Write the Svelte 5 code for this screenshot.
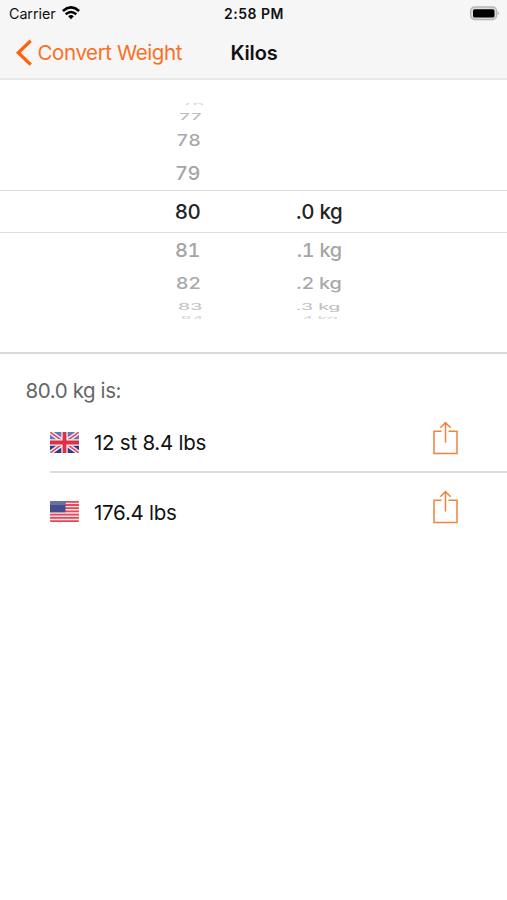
<script>
  const rows = [
    { h: 8, whole: '76', part: '', sx: 0.84, sy: 0.3, dx: 5, dy: 0, color: '#d8d8d8', edge: 'top' },
    { h: 16, whole: '77', part: '', sx: 0.9, sy: 0.44, dx: 2.5, dy: 0.5, color: '#bdbdbd' },
    { h: 32, whole: '78', part: '', sx: 0.95, sy: 0.78, dx: 0.7, dy: 0.8, color: '#a9a9a9' },
    { h: 34, whole: '79', part: '', sx: 0.97, sy: 0.94, dx: 0, dy: 0, color: '#a5a5a5' },
    { h: 43, whole: '80', part: '.0 kg', sx: 1, sy: 1, dx: 0, dy: 0, color: '#242424', selected: true },
    { h: 34, whole: '81', part: '.1 kg', sx: 0.97, sy: 0.94, dx: 0, dy: 0, color: '#a5a5a5' },
    { h: 32, whole: '82', part: '.2 kg', sx: 0.97, sy: 0.78, dx: 0.7, dy: 0.8, color: '#a9a9a9' },
    { h: 15, whole: '83', part: '.3 kg', sx: 0.95, sy: 0.44, dx: 2.5, dy: -0.3, color: '#c2c2c2' },
    { h: 9, whole: '84', part: '.4 kg', sx: 0.88, sy: 0.3, dx: 4, dy: 0, color: '#d8d8d8', edge: 'bottom' }
  ];
  const results = [
    { flag: 'uk', text: '12 st 8.4 lbs' },
    { flag: 'us', text: '176.4 lbs' }
  ];
</script>

<div class="screen">
  <header>
    <div class="status">
      <div class="carrier">
        <span>Carrier</span>
        <svg width="18" height="14" viewBox="0 0 18 14" fill="none" stroke="#000" stroke-width="2.6">
          <path d="M.9 4.9Q9-2.2 17.1 4.9M3.7 8.2Q9 3.8 14.3 8.2" />
          <path d="M6.1 10.3Q9 7.9 11.9 10.3L9 13.2Z" fill="#000" stroke="none" />
        </svg>
      </div>
      <span class="time">2:58 PM</span>
      <div class="power">
        <svg width="31" height="15" viewBox="0 0 31 15">
          <rect x="1.6" y="1" width="26" height="12.5" rx="4" fill="#ddd" stroke="#b5b5b5" stroke-width="1.3" />
          <rect x="4" y="3.2" width="21.5" height="8.3" rx="1.6" fill="#000" />
          <path d="M28.8 5.2Q30.8 7.2 28.8 9.2Z" fill="#999" />
        </svg>
      </div>
    </div>
    <nav>
      <div class="back">
        <svg width="17" height="28" viewBox="0 0 17 28" fill="none" stroke="#fb6310" stroke-width="3.3">
          <path d="M15.7 1.8L3.3 13.7L15.7 25.6" />
        </svg>
        <span>Convert Weight</span>
      </div>
      <h1>Kilos</h1>
      <div></div>
    </nav>
  </header>

  <section class="picker">
    {#each rows as row}
      <div class="row {row.edge ?? ''}" class:selected={row.selected} style="height: {row.h}px; color: {row.color}">
        <span class="whole" style="transform: translate({row.dx}px, {row.dy}px) scale({row.sx}, {row.sy})">{row.whole}</span>
        <span class="part" style="transform: translate({-row.dx / 2}px, {row.dy}px) scale({row.sx}, {row.sy})">{row.part}</span>
      </div>
    {/each}
  </section>

  <main>
    <h2>80.0 kg is:</h2>
    {#each results as result}
      <div class="result">
        {#if result.flag === 'uk'}
          <svg class="flag" width="29" height="21" viewBox="0 0 29 21">
            <rect width="29" height="21" fill="#293c8c" />
            <rect width="29" height="8" fill="#6578b0" />
            <path d="M0 0L29 21M29 0L0 21" stroke="#f4eef3" stroke-width="4.4" />
            <path d="M0 0L14.5 10.5M29 21L14.5 10.5M29 0L14.5 10.5M0 21L14.5 10.5" stroke="#dc5260" stroke-width="1.6" />
            <path d="M14.5 0V21M0 10.5H29" stroke="#f6eef2" stroke-width="6.4" />
            <path d="M14.5 0V21M0 10.5H29" stroke="#db3048" stroke-width="3.8" />
          </svg>
        {:else}
          <svg class="flag" width="29" height="21" viewBox="0 0 29 21">
            <rect width="29" height="21" fill="#fbe3e5" />
            <path d="M0 .8H29M0 4H29M0 7.2H29M0 10.4H29M0 13.6H29M0 16.8H29M0 20.1H29" stroke="#e5485a" stroke-width="1.8" />
            <rect width="15.5" height="11.3" fill="#454d8c" />
            <rect width="15.5" height="4" fill="#6870a4" />
          </svg>
        {/if}
        <span>{result.text}</span>
        <svg class="share" width="26" height="34" viewBox="0 0 26 34" fill="none" stroke="#f4813f" stroke-width="1.5">
          <path d="M9.5 10.2H2V32.5H25V10.2H16.5M13.5 21.5V1.8M8.3 6.8L13.5 1.6L18.7 6.8" />
        </svg>
      </div>
    {/each}
  </main>
</div>

<style>
  :global(body) { background: #fff; }
  .screen {
    width: 507px;
    height: 900px;
    overflow: hidden;
    background: #fff;
    font-family: Inter, 'Liberation Sans', sans-serif;
    color: #111;
  }
  svg { display: block; flex: none; }
  header {
    box-sizing: border-box;
    height: 80px;
    background: #f7f6f7;
    border-bottom: 2px solid #e7e7e7;
  }
  .status {
    display: grid;
    grid-template-columns: 1fr auto 1fr;
    align-items: center;
    height: 27px;
    padding: 0 7px 0 9px;
    font-size: 14.3px;
  }
  .carrier { display: flex; align-items: center; gap: 6px; letter-spacing: -0.05px; }
  .carrier svg { margin-top: -1px; }
  .time { font-weight: 600; font-size: 14px; letter-spacing: 0.5px; margin-left: -1px; }
  .power { display: flex; justify-content: flex-end; }
  nav {
    display: grid;
    grid-template-columns: 1fr auto 1fr;
    align-items: center;
    height: 51px;
    padding: 0 15px 0 15px;
  }
  .back {
    display: flex;
    align-items: center;
    gap: 5.5px;
    color: #fb6f24;
    font-size: 20.5px;
    letter-spacing: -0.4px;
    white-space: nowrap;
  }
  h1 { margin: 0 0 0 1px; font-size: 20px; font-weight: 600; letter-spacing: -0.15px; }
  .picker {
    box-sizing: border-box;
    height: 274px;
    padding-top: 20px;
    border-bottom: 2px solid #d9d9d9;
  }
  .row {
    box-sizing: border-box;
    display: flex;
    align-items: center;
    font-size: 20.5px;
    line-height: 24px;
    font-weight: 500;
    letter-spacing: -0.3px;
    font-variant-numeric: tabular-nums;
    overflow: hidden;
  }
  .row.selected { border-top: 1px solid #dedede; border-bottom: 1px solid #dedede; }
  .row.top { clip-path: inset(3px 0 3px 0); }
  .row.bottom { clip-path: inset(2px 0 4px 0); }
  .whole { width: 200.6px; text-align: right; transform-origin: 188px center; }
  .part { width: 60px; margin-left: 95.4px; white-space: nowrap; transform-origin: 24px center; }
  h2 {
    margin: 0;
    padding: 25px 0 0 25.5px;
    font-size: 20.5px;
    line-height: 24px;
    font-weight: 400;
    letter-spacing: -0.4px;
    color: #666;
  }
  .result {
    box-sizing: border-box;
    display: flex;
    align-items: center;
    height: 70px;
    margin-left: 50px;
    padding: 7px 49px 0 0;
    font-size: 20.5px;
    letter-spacing: -0.25px;
  }
  .result:not(:last-child) { padding-top: 10px; border-bottom: 2px solid #dcdcdc; }
  .result span { margin-left: 15px; flex: 1; }
  .result:last-child span { padding-top: 1.5px; }
  .flag { border-radius: 1px; }
  .share { margin-top: -8px; }
  .result:last-child .share { margin-top: -9px; }
</style>
